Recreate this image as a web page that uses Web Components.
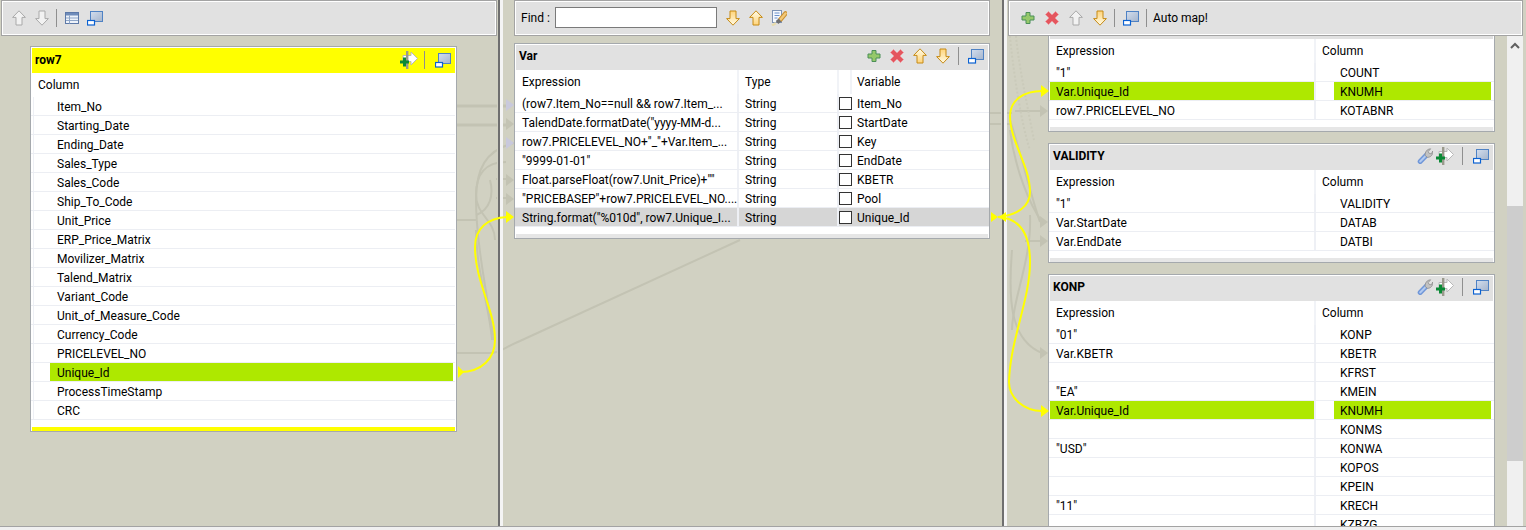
<!DOCTYPE html>
<html>
<head>
<meta charset="utf-8">
<title>tMap</title>
<style>
html, body { margin: 0; height: 100%; overflow: hidden; }
body { font: 12px Roboto, "Liberation Sans", sans-serif; color: #000; background: #f0f0f0; }
.ml3 { margin-left: 3px; }
.ml6 { margin-left: 6px; }
.ml7 { margin-left: 7px; }
.ml8 { margin-left: 8px; }
.ml9 { margin-left: 9px; }
.ml10 { margin-left: 10px; }
.find { width: 34px; }
</style>
</head>
<body>

<tm-app>
  <tm-pane slot="left" kind="left">
    <tm-toolbar slot="toolbar" pad="8">
      <tm-icon name="up-off"></tm-icon>
      <tm-icon name="down-off" class="ml7"></tm-icon>
      <tm-sep class="ml6"></tm-sep>
      <tm-icon name="table" class="ml7"></tm-icon>
      <tm-icon name="window" class="ml7"></tm-icon>
    </tm-toolbar>
    <tm-panel title="row7" accent="#ffff00">
      <tm-icon slot="tools" name="add-arrow"></tm-icon>
      <tm-sep slot="tools" class="ml6"></tm-sep>
      <tm-icon slot="tools" name="window" class="ml10"></tm-icon>
      <tm-table kind="single" src="row7"></tm-table>
    </tm-panel>
  </tm-pane>

  <tm-pane slot="middle" kind="middle">
    <tm-toolbar slot="toolbar" pad="5">
      <span class="find">Find :</span>
      <tm-search></tm-search>
      <tm-icon name="down" class="ml8"></tm-icon>
      <tm-icon name="up" class="ml7"></tm-icon>
      <tm-icon name="find" class="ml7"></tm-icon>
    </tm-toolbar>
    <tm-panel title="Var">
      <tm-icon slot="tools" name="plus"></tm-icon>
      <tm-icon slot="tools" name="cross" class="ml7"></tm-icon>
      <tm-icon slot="tools" name="up" class="ml7"></tm-icon>
      <tm-icon slot="tools" name="down" class="ml7"></tm-icon>
      <tm-sep slot="tools" class="ml7"></tm-sep>
      <tm-icon slot="tools" name="window" class="ml9"></tm-icon>
      <tm-table kind="vars" src="vars"></tm-table>
    </tm-panel>
  </tm-pane>

  <tm-pane slot="right" kind="right">
    <tm-toolbar slot="toolbar" pad="10">
      <tm-icon name="plus"></tm-icon>
      <tm-icon name="cross" class="ml8"></tm-icon>
      <tm-icon name="up-off" class="ml8"></tm-icon>
      <tm-icon name="down" class="ml8"></tm-icon>
      <tm-sep class="ml6"></tm-sep>
      <tm-icon name="window" class="ml8"></tm-icon>
      <tm-sep class="ml7"></tm-sep>
      <span class="ml6">Auto map!</span>
    </tm-toolbar>
    <tm-panel title="KOTAB">
      <tm-table kind="map" src="kotab"></tm-table>
    </tm-panel>
    <tm-panel title="VALIDITY">
      <tm-icon slot="tools" name="wrench"></tm-icon>
      <tm-icon slot="tools" name="add-arrow" class="ml3"></tm-icon>
      <tm-sep slot="tools" class="ml8"></tm-sep>
      <tm-icon slot="tools" name="window" class="ml10"></tm-icon>
      <tm-table kind="map" src="validity"></tm-table>
    </tm-panel>
    <tm-panel title="KONP">
      <tm-icon slot="tools" name="wrench"></tm-icon>
      <tm-icon slot="tools" name="add-arrow" class="ml3"></tm-icon>
      <tm-sep slot="tools" class="ml8"></tm-sep>
      <tm-icon slot="tools" name="window" class="ml10"></tm-icon>
      <tm-table kind="map" src="konp"></tm-table>
    </tm-panel>
  </tm-pane>
</tm-app>

<script>
const TABLES = {
  row7: {
    head: ['Column'],
    rows: ['Item_No', 'Starting_Date', 'Ending_Date', 'Sales_Type', 'Sales_Code', 'Ship_To_Code', 'Unit_Price',
      'ERP_Price_Matrix', 'Movilizer_Matrix', 'Talend_Matrix', 'Variant_Code', 'Unit_of_Measure_Code',
      'Currency_Code', 'PRICELEVEL_NO', 'Unique_Id', 'ProcessTimeStamp', 'CRC'].map(n => [n]),
    on: 14
  },
  vars: {
    head: ['Expression', 'Type', '', 'Variable'],
    rows: [
      ['(row7.Item_No==null && row7.Item_...', 'String', 'Item_No'],
      ['TalendDate.formatDate("yyyy-MM-d...', 'String', 'StartDate'],
      ['row7.PRICELEVEL_NO+"_"+Var.Item_...', 'String', 'Key'],
      ['"9999-01-01"', 'String', 'EndDate'],
      ['Float.parseFloat(row7.Unit_Price)+""', 'String', 'KBETR'],
      ['"PRICEBASEP"+row7.PRICELEVEL_NO....', 'String', 'Pool'],
      ['String.format("%010d", row7.Unique_I...', 'String', 'Unique_Id']
    ],
    grey: 6
  },
  kotab: {
    head: ['Expression', 'Column'],
    rows: [['"1"', 'COUNT'], ['Var.Unique_Id', 'KNUMH'], ['row7.PRICELEVEL_NO', 'KOTABNR']],
    on: 1
  },
  validity: {
    head: ['Expression', 'Column'],
    rows: [['"1"', 'VALIDITY'], ['Var.StartDate', 'DATAB'], ['Var.EndDate', 'DATBI']]
  },
  konp: {
    head: ['Expression', 'Column'],
    rows: [['"01"', 'KONP'], ['Var.KBETR', 'KBETR'], ['', 'KFRST'], ['"EA"', 'KMEIN'], ['Var.Unique_Id', 'KNUMH'],
      ['', 'KONMS'], ['"USD"', 'KONWA'], ['', 'KOPOS'], ['', 'KPEIN'], ['"11"', 'KRECH'], ['', 'KZBZG']],
    on: 4
  }
};

const GOLD = `<defs><linearGradient id="g" x1="0" y1="0" x2="0" y2="1"><stop offset="0" stop-color="#fffbe6"/><stop offset="1" stop-color="#ffd47a"/></linearGradient></defs>`;
const ARROW = 'M8 .8 14.4 7.4H11V15H5V7.4H1.6Z';
const ICONS = {
  'up': `${GOLD}<path d="${ARROW}" fill="url(#g)" stroke="#c68a14"/>`,
  'down': `${GOLD}<path transform="rotate(180 8 8)" d="${ARROW}" fill="url(#g)" stroke="#c68a14"/>`,
  'up-off': `<path d="${ARROW}" fill="#f2f2f2" stroke="#a9a9a9"/>`,
  'down-off': `<path transform="rotate(180 8 8)" d="${ARROW}" fill="#f2f2f2" stroke="#a9a9a9"/>`,
  'plus': `<path d="M6 2.5h4v3.5h4v4h-4v3.5H6V10H2V6h4z" fill="#96c86a" stroke="#4b8f58"/>`,
  'cross': `<path d="M4.5 1.5 8 5l3.5-3.5 3 3L11 8l3.5 3.5-3 3L8 11l-3.5 3.5-3-3L5 8 1.5 4.5z" fill="#e4565e" stroke="#ee9299" stroke-width=".8"/>`,
  'window': `<defs><linearGradient id="w" x1="0" y1="0" x2="1" y2="1"><stop offset="0" stop-color="#d3deee"/><stop offset="1" stop-color="#a4b4cc"/></linearGradient></defs>
    <rect x="3.5" y="1.5" width="12" height="10" fill="url(#w)" stroke="#4f82c4"/>
    <rect x=".5" y="10.5" width="7" height="4.5" fill="#fff" stroke="#0b62d2" stroke-width="1.2"/>`,
  'table': `<rect x="1.5" y="2.5" width="13" height="11" fill="#eef3fa" stroke="#5d79a8"/>
    <rect x="2" y="3" width="12" height="2.5" fill="#6f8cba"/>
    <path d="M2 8h12M2 10.5h12M5.5 5.5v8" stroke="#8fa6c8" fill="none"/>`,
  'add-arrow': `<path d="M3 4.5h8V1L17.5 7.5 11 14v-3.5H3z" fill="#fff" stroke="#b8b8b8"/>
    <rect x="6" y="0" width="2.4" height="18" fill="#9a9a8c"/>
    <path d="M3 6.5h3v3h3v3H6v3H3v-3H0v-3h3z" fill="#0b8a36"/>`,
  'wrench': `<path d="M3.2 13.5 9.5 7" stroke="#6f96d8" stroke-width="5" stroke-linecap="round" fill="none"/>
    <path d="M3.2 13.5 9.5 7" stroke="#b2caf0" stroke-width="2" stroke-linecap="round" fill="none"/>
    <path d="M8.2 7.6C7.8 4 10 1 13.6 .8L11.2 3.6 12.3 5.5 14.4 5.8 15.8 3C16.2 6.5 14 9.2 10.6 9.4Z" fill="#c2c2c2" stroke="#8c8c8c" stroke-width=".8"/>`,
  'find': `<rect x="1.5" y=".5" width="9" height="12" fill="#f6f9fe" stroke="#7e93b4"/>
    <path d="M3.5 3h5M3.5 5.5h5M3.5 8h3" stroke="#6c92cc" fill="none"/>
    <path d="M9.5 9.5 14.5 3.5" stroke="#c98f30" stroke-width="4.5" stroke-linecap="round" fill="none"/>
    <path d="M9.5 9.5 14.5 3.5" stroke="#f2c878" stroke-width="2.5" stroke-linecap="round" fill="none"/>
    <path d="M6 12.5 9 10" stroke="#6f6f6f" stroke-width="4" fill="none"/>
    <path d="M1 15.5 5 13" stroke="#e8dcae" stroke-width="2.5" fill="none"/>`
};

class TmIcon extends HTMLElement {
  constructor() {
    super();
    this.attachShadow({ mode: 'open' });
  }
  connectedCallback() {
    const name = this.getAttribute('name');
    const size = name === 'add-arrow' ? 18 : 16;
    this.shadowRoot.innerHTML = `
      <style>:host { display: block; flex: none; width: ${size}px; height: ${size}px; } svg { display: block; }</style>
      <svg width="${size}" height="${size}" viewBox="0 0 ${size} ${size}">${ICONS[name] || ''}</svg>`;
  }
}

class TmSep extends HTMLElement {
  constructor() {
    super();
    this.attachShadow({ mode: 'open' }).innerHTML =
      `<style>:host { display: block; flex: none; width: 1px; height: 18px; background: #8f8f8f; }</style>`;
  }
}

class TmSearch extends HTMLElement {
  constructor() {
    super();
    this.attachShadow({ mode: 'open' }).innerHTML = `
      <style>
      :host { display: block; flex: none; }
      input { display: block; box-sizing: border-box; width: 162px; height: 21px; margin: 0 0 1px; padding: 0 3px;
        border: 1px solid #7a7a7a; background: #fff; outline: none; }
      </style>
      <input type="text">`;
  }
}

class TmToolbar extends HTMLElement {
  constructor() {
    super();
    this.attachShadow({ mode: 'open' }).innerHTML = `
      <style>
      :host { display: flex; align-items: center; flex: none; box-sizing: border-box; height: 36px;
        padding-left: calc(var(--pad, 8px) + 1px); border: 1px solid #a3a3a3; background: #e1e1e1;
        box-shadow: inset 0 0 0 1px #fff; position: relative; z-index: 3; }
      </style>
      <slot></slot>`;
  }
  connectedCallback() {
    this.style.setProperty('--pad', this.getAttribute('pad') + 'px');
  }
}

class TmTable extends HTMLElement {
  constructor() {
    super();
    this.attachShadow({ mode: 'open' });
  }
  cells(kind, row) {
    if (kind === 'single') {
      return `<div class="c"></div><div class="c"><div class="t">${row[0]}</div></div>`;
    }
    if (kind === 'vars') {
      return `<div class="c"><div class="t">${row[0]}</div></div><div class="c"><div class="t">${row[1]}</div></div>
        <div class="c box"><i></i></div><div class="c"><div class="t">${row[2]}</div></div>`;
    }
    return `<div class="c"><div class="t">${row[0]}</div></div><div class="c"></div><div class="c"><div class="t">${row[1]}</div></div>`;
  }
  connectedCallback() {
    const kind = this.getAttribute('kind');
    const data = TABLES[this.getAttribute('src')];
    const esc = s => s.replace(/&/g, '&amp;');
    const head = data.head.map(h => `<div class="h">${h}</div>`).join('');
    const rows = data.rows.map((r, i) => {
      const cls = i === data.on ? 'row on' : i === data.grey ? 'row grey' : 'row';
      return `<div class="${cls}">${this.cells(kind, r.map(esc))}</div>`;
    }).join('');
    this.shadowRoot.innerHTML = `
      <style>
      :host { display: block; }
      .head, .row { display: grid; }
      .head { height: 24px; align-items: center; }
      .h { height: 24px; line-height: 25px; padding-left: 6px; border-right: 2px solid #f1f3f7; box-sizing: border-box; white-space: nowrap; }
      .h:last-child { border-right: 0; }
      .row { height: 19px; box-sizing: border-box; border-bottom: 1px solid #eceef3; }
      .c { min-width: 0; height: 18px; box-sizing: border-box; border-right: 2px solid #eef0f5; }
      .c:last-child { border-right: 0; }
      .t { height: 18px; line-height: 20px; padding-left: 6px; white-space: nowrap; overflow: hidden; }
      .on .t { background: #aee800; }
      .grey { background: #d6d6d6; }
      .box i { display: block; box-sizing: border-box; width: 13px; height: 13px; margin-top: 3px; border: 1px solid #333; background: #fff; }

      :host([kind=single]) .head { grid-template-columns: 1fr; }
      :host([kind=single]) .h { padding-left: 7px; }
      :host([kind=single]) .row { grid-template-columns: 19px 1fr; margin-right: 1px; }
      :host([kind=single]) .c:first-child { margin-left: 2px; border-left: 1px solid #eef0f5; border-right: 0; }
      :host([kind=single]) .t { margin-right: 2px; padding-left: 7px; }

      :host([kind=vars]) .head, :host([kind=vars]) .row { grid-template-columns: 224px 100px 13px 1fr; }
      :host([kind=vars]) .h { padding-left: 7px; }
      :host([kind=vars]) .h:nth-child(2) { padding-left: 6px; }
      :host([kind=vars]) .h:nth-child(4) { padding-left: 5px; }
      :host([kind=vars]) .box { border-right: 0; }
      :host([kind=vars]) .c:nth-child(4) .t { padding-left: 5px; }
      :host([kind=vars]) .c:first-child .t { padding-left: 7px; }

      :host([kind=map]) .head { grid-template-columns: 267px 1fr; }
      :host([kind=map]) .row { grid-template-columns: 267px 18px 1fr; }
      :host([kind=map]) .h:first-child { padding-left: 7px; }
      :host([kind=map]) .c:first-child .t { margin-left: 1px; padding-left: 6px; }
      :host([kind=map]) .c:nth-child(2) { border-right: 0; }
      :host([kind=map]) .c:last-child .t { margin-right: 3px; }
      </style>
      <div class="head">${head}</div>${rows}`;
  }
}

class TmPanel extends HTMLElement {
  constructor() {
    super();
    this.attachShadow({ mode: 'open' });
  }
  connectedCallback() {
    const accent = this.getAttribute('accent');
    const bar = accent || '#e1e1e1';
    this.shadowRoot.innerHTML = `
      <style>
      :host { display: block; flex: none; box-sizing: border-box; border: 1px solid #a5a9ad; background: #fff; }
      .title { display: flex; align-items: center; box-sizing: border-box; height: 25px; margin: 1px 1px 0;
        padding: 0 4px ${accent ? 2 : 4}px 3px; background: ${bar}; }
      b { flex: 1; font-weight: 700; }
      .strip { height: 4px; margin: 7px 1px 0; background: ${accent ? accent : '#e6e6e6'}; }
      </style>
      <div class="title"><b>${this.getAttribute('title')}</b><slot name="tools"></slot></div>
      <slot></slot>
      <div class="strip"></div>`;
  }
}

class TmPane extends HTMLElement {
  constructor() {
    super();
    this.attachShadow({ mode: 'open' }).innerHTML = `
      <style>
      :host { display: flex; flex-direction: column; min-width: 0; position: relative; z-index: 1; }
      ::slotted([slot=toolbar]) { margin: 0 0 0 1px; }
      .canvas { flex: 1; min-height: 0; overflow: hidden; display: flex; flex-direction: column; }
      :host([kind=left]) .canvas { padding: 10px 0 0 30px; }
      :host([kind=left]) ::slotted(tm-panel) { width: 427px; }
      :host([kind=middle]) ::slotted([slot=toolbar]) { margin: 0 11px; }
      :host([kind=middle]) .canvas { padding: 7px 11px 0; }
      :host([kind=right]) ::slotted([slot=toolbar]) { margin: 0 3px 0 1px; }
      .frame { flex: 1; min-height: 0; display: flex; }
      :host([kind=right]) .canvas { padding-left: 41px; gap: 11px; }
      :host([kind=right]) ::slotted(tm-panel) { width: 447px; }
      :host([kind=right]) ::slotted(tm-panel:nth-of-type(1)) { margin-top: -24px; }
      .bar { display: none; }
      :host([kind=right]) .bar { display: flex; flex: none; width: 16px; margin-left: 12px; margin-right: 3px; flex-direction: column;
        background: #f0f0f0; }
      :host([kind=right]) .canvas { flex: 1; }
      .btn { flex: none; height: 17px; display: flex; align-items: center; justify-content: center; }
      .track { flex: 1; padding-top: 152px; padding-bottom: 68px; display: flex; }
      .thumb { flex: 1; background: #cdcdcd; }
      .btn.a { margin-top: 1px; }
      </style>
      <slot name="toolbar"></slot>
      <div class="frame">
        <div class="canvas"><slot></slot></div>
        <div class="bar">
          <div class="btn a"><svg width="10" height="8" viewBox="0 0 10 8"><path d="M1 6 5 2l4 4" fill="none" stroke="#606060" stroke-width="2"/></svg></div>
          <div class="track"><div class="thumb"></div></div>
          <div class="btn"><svg width="10" height="8" viewBox="0 0 10 8"><path d="M1 2l4 4 4-4" fill="none" stroke="#606060" stroke-width="2"/></svg></div>
        </div>
      </div>`;
  }
}

const head = (x, y, fill) => `<path d="M${x - 8} ${y - 6}L${x} ${y}L${x - 8} ${y + 6}Z" fill="${fill}"/>`;

class TmWires extends HTMLElement {
  constructor() {
    super();
    this.attachShadow({ mode: 'open' });
  }
  connectedCallback() {
    const top = this.hasAttribute('top');
    const grey = '#c3c3b3';
    const body = top ? `
      <g fill="none" stroke="#ffff00" stroke-width="2">
        <path d="M460 372C482 372 495 358 495 340C495 310 475 282 475 247C475 228 488 218 507 217"/>
        <path d="M998 217C1018 215 1030 206 1030 192C1030 165 1010 142 1010 116C1010 100 1024 91 1042 91"/>
        <path d="M998 217C1018 218 1030 232 1030 262C1030 300 1010 340 1009 382C1009 398 1024 411 1042 411"/>
      </g>
      ${head(514, 217, '#ffff00')}${head(1049, 91, '#ffff00')}${head(1049, 411, '#ffff00')}
      <path d="M458 366L464 372L458 378Z" fill="#ffff00"/>
      <path d="M991 212L998 217L991 222Z" fill="#ffff00"/>
      <path d="M1006 212L999 217L1006 222Z" fill="#ffff00"/>` : `
      <g fill="none" stroke="${grey}" stroke-width="2">
        <path d="M457 106H508" stroke-width="3"/>
        <path d="M457 125H508" stroke-width="3"/>
        <path d="M514 143C485 150 476 170 476 200C476 240 486 290 494 340"/>
        <path d="M506 162C485 162 476 175 476 195C476 215 495 220 495 240"/>
        <path d="M496 179H508M496 198H508"/>
        <path d="M457 220H476M476 215C490 210 494 195 490 180"/>
        <path d="M476 230C476 270 490 310 492 340"/>
        <path d="M457 353H490C500 353 505 347 520 341L740 240" stroke-width="2"/>
        <path d="M990 113H1012M990 124H1010" />
        <path d="M1015 111H1042M1010 120C1020 150 1032 200 1040 222"/>
        <path d="M1010 130C1015 170 1030 205 1042 222M1025 241H1042"/>
        <path d="M1012 250C1008 300 1010 340 1042 353"/>
        <path d="M1030 215C1032 260 1012 300 1012 330"/>
      </g>
      <g fill="none" stroke="#cacaba" stroke-width="2" stroke-dasharray="2 2">
        <path d="M1010 36C1012 60 1020 120 1030 150M1016 36C1018 60 1026 100 1034 140"/>
      </g>
      ${head(514, 105, '#c9c9dc')}${head(514, 124, grey)}${head(514, 143, '#c9c9dc')}
      ${head(514, 180, grey)}${head(514, 199, grey)}
      ${head(1048, 111, grey)}${head(1048, 222, grey)}${head(1048, 241, grey)}${head(1048, 353, grey)}`;
    this.shadowRoot.innerHTML = `
      <style>
      :host { position: absolute; inset: 0; z-index: ${top ? 4 : 0}; pointer-events: none; }
      svg { display: block; }
      </style>
      <svg width="1526" height="526" viewBox="0 0 1526 526">${body}</svg>`;
  }
}

class TmApp extends HTMLElement {
  constructor() {
    super();
    this.attachShadow({ mode: 'open' }).innerHTML = `
      <style>
      :host { display: block; }
      .main { position: relative; display: grid; grid-template-columns: 497px 6px 498px 6px 1fr; height: 526px;
        background: #d1d1c2; overflow: hidden; }
      .sash { position: relative; z-index: 2; background: linear-gradient(90deg, #d1d1c2 0 1px, #6f6f6f 1px 3px, #f4f4f4 3px); }
      .foot { height: 4px; box-sizing: border-box; border-top: 1px solid #a3a3a3; background: #f0f0f0; }
      </style>
      <div class="main">
        <tm-wires></tm-wires>
        <slot name="left"></slot>
        <div class="sash"></div>
        <slot name="middle"></slot>
        <div class="sash"></div>
        <slot name="right"></slot>
        <tm-wires top></tm-wires>
      </div>
      <div class="foot"></div>`;
  }
}

customElements.define('tm-icon', TmIcon);
customElements.define('tm-sep', TmSep);
customElements.define('tm-search', TmSearch);
customElements.define('tm-toolbar', TmToolbar);
customElements.define('tm-table', TmTable);
customElements.define('tm-panel', TmPanel);
customElements.define('tm-pane', TmPane);
customElements.define('tm-wires', TmWires);
customElements.define('tm-app', TmApp);
</script>
</body>
</html>
